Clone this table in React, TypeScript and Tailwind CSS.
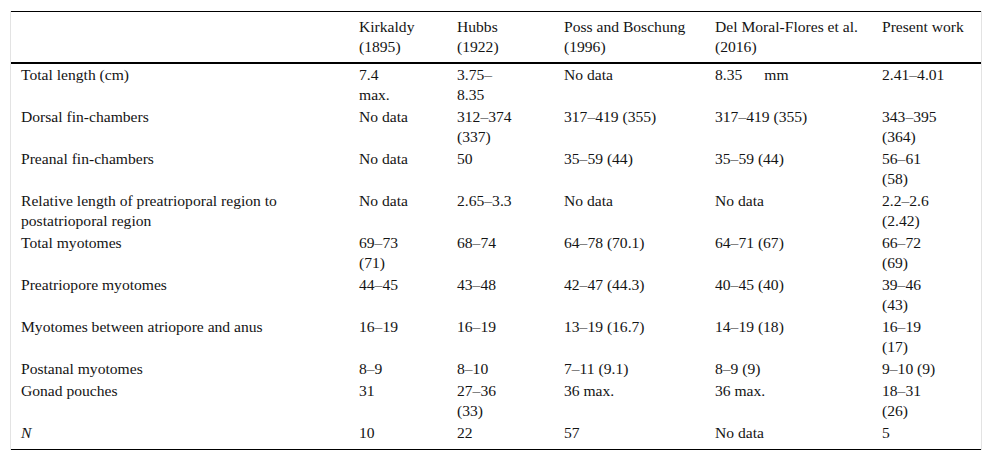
import * as React from 'react';

type Row = { label: React.ReactNode[]; cells: React.ReactNode[][] };

const headers: string[][] = [
  [],
  ['Kirkaldy', '(1895)'],
  ['Hubbs', '(1922)'],
  ['Poss and Boschung', '(1996)'],
  ['Del Moral-Flores et al.', '(2016)'],
  ['Present work'],
];

const rows: Row[] = [
  {
    label: ['Total length (cm)'],
    cells: [
      ['7.4', 'max.'],
      ['3.75–', '8.35'],
      ['No data'],
      [
        <span key="a">
          8.35<span className="ml-[22px]">mm</span>
        </span>,
      ],
      ['2.41–4.01'],
    ],
  },
  {
    label: ['Dorsal fin-chambers'],
    cells: [['No data'], ['312–374', '(337)'], ['317–419 (355)'], ['317–419 (355)'], ['343–395', '(364)']],
  },
  {
    label: ['Preanal fin-chambers'],
    cells: [['No data'], ['50'], ['35–59 (44)'], ['35–59 (44)'], ['56–61', '(58)']],
  },
  {
    label: ['Relative length of preatrioporal region to', 'postatrioporal region'],
    cells: [['No data'], ['2.65–3.3'], ['No data'], ['No data'], ['2.2–2.6', '(2.42)']],
  },
  {
    label: ['Total myotomes'],
    cells: [['69–73', '(71)'], ['68–74'], ['64–78 (70.1)'], ['64–71 (67)'], ['66–72', '(69)']],
  },
  {
    label: ['Preatriopore myotomes'],
    cells: [['44–45'], ['43–48'], ['42–47 (44.3)'], ['40–45 (40)'], ['39–46', '(43)']],
  },
  {
    label: ['Myotomes between atriopore and anus'],
    cells: [['16–19'], ['16–19'], ['13–19 (16.7)'], ['14–19 (18)'], ['16–19', '(17)']],
  },
  {
    label: ['Postanal myotomes'],
    cells: [['8–9'], ['8–10'], ['7–11 (9.1)'], ['8–9 (9)'], ['9–10 (9)']],
  },
  {
    label: ['Gonad pouches'],
    cells: [['31'], ['27–36', '(33)'], ['36 max.'], ['36 max.'], ['18–31', '(26)']],
  },
  {
    label: [<i key="n">N</i>],
    cells: [['10'], ['22'], ['57'], ['No data'], ['5']],
  },
];

function Lines({ lines }: { lines: React.ReactNode[] }) {
  return (
    <>
      {lines.map((l, i) => (
        <div key={i} className="whitespace-nowrap">
          {l}
        </div>
      ))}
    </>
  );
}

export default function App() {
  return (
    <div className="min-h-[461px] bg-white pl-[10px] pt-[11px] [font-family:'Liberation_Serif','Times_New_Roman',serif] text-[15.6px] leading-[20px] text-[#141414]">
      <div className="w-[972px] border-x border-[#e3e3e3]">
        <table className="w-[970px] table-fixed border-collapse">
          <colgroup>
            <col className="w-[338px]" />
            <col className="w-[98px]" />
            <col className="w-[107px]" />
            <col className="w-[151px]" />
            <col className="w-[167px]" />
            <col className="w-[109px]" />
          </colgroup>
          <thead>
            <tr className="border-t border-b-2 border-t-black border-b-black">
              {headers.map((h, i) => (
                <th key={i} className="px-[10px] pt-[5px] pb-[5px] text-left align-top font-normal">
                  <Lines lines={h} />
                </th>
              ))}
            </tr>
          </thead>
          <tbody className="border-b border-black">
            {rows.map((r, ri) => (
              <tr key={ri}>
                <td className={`px-[10px] pt-[1px] align-top ${ri === rows.length - 1 ? 'pb-[6px]' : 'pb-[1px]'}`}>
                  <Lines lines={r.label} />
                </td>
                {r.cells.map((c, ci) => (
                  <td
                    key={ci}
                    className={`px-[10px] pt-[1px] align-top ${ri === rows.length - 1 ? 'pb-[6px]' : 'pb-[1px]'}`}
                  >
                    <Lines lines={c} />
                  </td>
                ))}
              </tr>
            ))}
          </tbody>
        </table>
      </div>
    </div>
  );
}
